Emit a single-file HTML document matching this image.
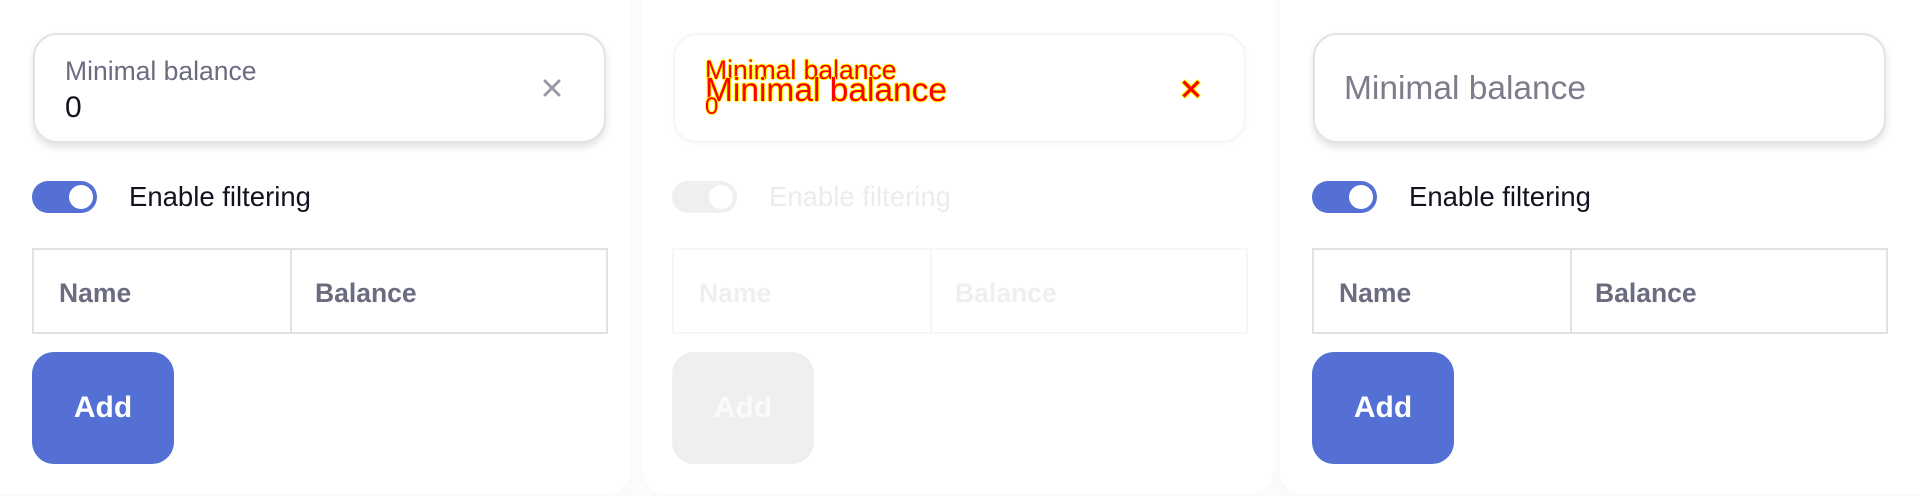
<!DOCTYPE html>
<html><head><meta charset="utf-8"><style>
*{box-sizing:border-box;margin:0;padding:0}
body{width:1920px;height:496px;background:#fbfbfb;position:relative;overflow:hidden;font-family:"Liberation Sans",sans-serif}
.card{position:absolute;top:-30px;height:524px;background:#fff;border-radius:22px;box-shadow:0 0 3px rgba(0,0,0,.025)}
.p{position:absolute;top:0;width:640px;height:496px}
.inp{position:absolute;left:33px;top:33px;width:573px;height:110px;border:2px solid #e3e3e7;border-radius:24px;background:#fff;box-shadow:0 4px 8px rgba(0,0,0,.12)}
.lbl{position:absolute;left:65px;top:58px;font-size:26.5px;line-height:26px;color:#6b6c80;white-space:nowrap}
.val{position:absolute;left:65px;top:93px;font-size:30px;line-height:30px;color:#12121f}
.x{position:absolute;left:542px;top:78px;width:20px;height:20px}
.tg{position:absolute;left:32px;top:181px;width:65px;height:32px;border-radius:16px;background:#5470d4}
.tg:after{content:"";position:absolute;left:37px;top:4px;width:24px;height:24px;border-radius:50%;background:#fff}
.en{position:absolute;left:129px;top:181px;line-height:32px;font-size:27.5px;color:#12121f;white-space:nowrap}
.tb{position:absolute;left:32px;top:248px;width:576px;height:86px;border:2px solid #e2e2e6}
.tb:after{content:"";position:absolute;left:256px;top:0;width:2px;height:82px;background:#e2e2e6}
.th{position:absolute;top:279px;font-size:26.5px;line-height:28px;font-weight:bold;color:#6b6c80;white-space:nowrap}
.btn{position:absolute;left:32px;top:352px;width:142px;height:112px;border-radius:22px;background:#5470d4;color:#fff;font-weight:bold;font-size:30px;line-height:112px;text-align:center}
.dim .inp{border-color:#f6f6f6;box-shadow:0 2px 6px rgba(0,0,0,.025)}
.dim .tg{background:#efefef}
.dim .en{color:#ececec}
.dim .tb{border-color:#f6f6f6}
.dim .tb:after{background:#f6f6f6}
.dim .th{color:#efefef}
.dim .btn{background:#efefef;color:#fafafa}
.red{position:absolute;color:#f00;white-space:nowrap;text-shadow:1px 0 #ff0,-1px 0 #ff0,0 1px #ff0,0 -1px #ff0}
</style></head><body>
<div class="card" style="left:-20px;width:650px"></div>
<div class="card" style="left:643px;width:630px"></div>
<div class="card" style="left:1280px;width:660px"></div>

<div class="p" style="left:0">
<div class="inp"></div>
<div class="lbl">Minimal balance</div>
<div class="val">0</div>
<svg class="x" viewBox="0 0 20 20"><path d="M3 3L17 17M17 3L3 17" stroke="#9a9aa6" stroke-width="3" stroke-linecap="round"/></svg>
<div class="tg"></div><div class="en">Enable filtering</div>
<div class="tb"></div>
<div class="th" style="left:59px">Name</div><div class="th" style="left:315px">Balance</div>
<div class="btn">Add</div>
</div>

<div class="p dim" style="left:640px">
<div class="inp"></div>
<div class="red" style="left:65px;top:58px;font-size:26.5px;line-height:24px">Minimal balance</div>
<div class="red" style="left:65px;top:76px;font-size:33.5px;line-height:30px">Minimal balance</div>
<div class="red" style="left:65px;top:96px;font-size:24px;line-height:22px">0</div>
<svg class="x" style="left:540px;top:78px;width:22px;height:22px" viewBox="0 0 22 22"><path d="M3 3L19 19M19 3L3 19" stroke="#ff0" stroke-width="5.5"/><path d="M3.5 3.5L18.5 18.5M18.5 3.5L3.5 18.5" stroke="#f00" stroke-width="3.2"/></svg>
<div class="tg"></div><div class="en">Enable filtering</div>
<div class="tb"></div>
<div class="th" style="left:59px">Name</div><div class="th" style="left:315px">Balance</div>
<div class="btn">Add</div>
</div>

<div class="p" style="left:1280px">
<div class="inp"></div>
<div class="lbl" style="left:64px;top:72px;font-size:33.5px;line-height:34px;color:#7c7d8c">Minimal balance</div>
<div class="tg"></div><div class="en">Enable filtering</div>
<div class="tb"></div>
<div class="th" style="left:59px">Name</div><div class="th" style="left:315px">Balance</div>
<div class="btn">Add</div>
</div>
</body></html>
